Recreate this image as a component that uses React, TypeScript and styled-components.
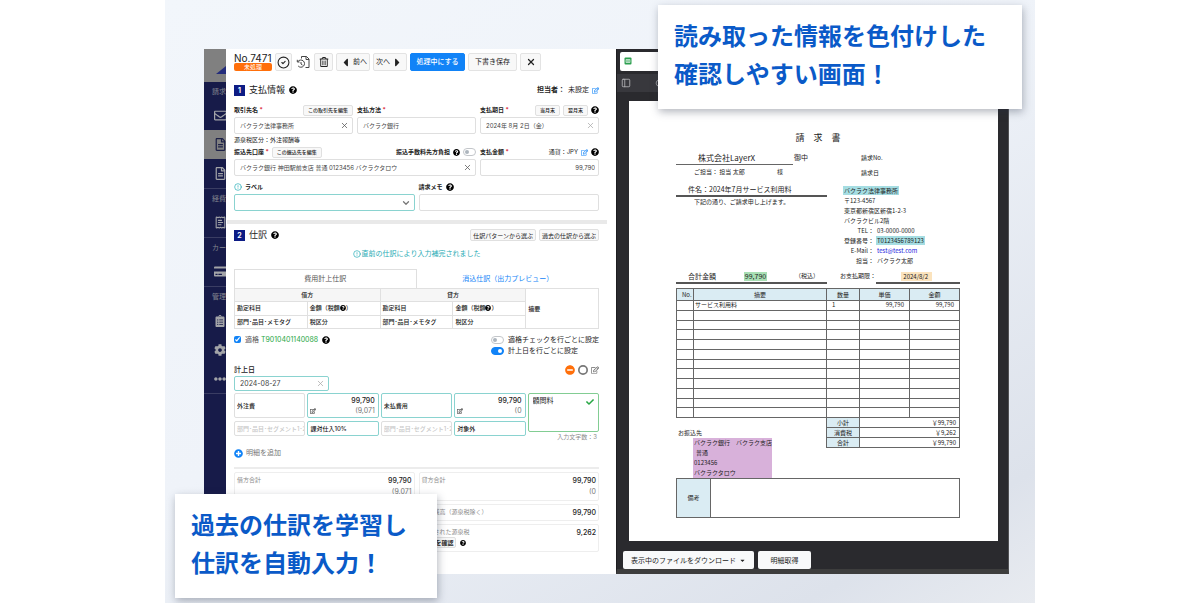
import React, { useState } from "react";
import styled, { createGlobalStyle, css } from "styled-components";
import {
  FaQuestionCircle,
  FaRegTrashAlt,
  FaRegEdit,
  FaCaretLeft,
  FaCaretRight,
  FaCaretDown,
  FaRegEnvelope,
  FaRegFileAlt,
  FaCreditCard,
  FaCog,
  FaEllipsisH,
  FaPlusCircle,
  FaMinusCircle,
  FaCheck,
  FaClipboardList,
} from "react-icons/fa";
import { X, CircleCheck, CircleAlert, ChevronDown, ReceiptText, Circle, Search, PanelLeft } from "lucide-react";

const color = {
  ink: "#222222",
  soft: "#555555",
  muted: "#8c8c8c",
  line: "#dfdfdf",
  teal: "#8ad3d0",
  tealText: "#1fabb5",
  blue: "#1183f7",
  navy: "#171b49",
  orange: "#ff6f0a",
  green: "#28a745",
  headline: "#0a5ac8",
};

const GlobalStyle = createGlobalStyle`
  * { box-sizing: border-box; }
  body {
    margin: 0;
    background: #ffffff;
    color: ${color.ink};
    font-family: Inter, "Noto Sans CJK JP", sans-serif;
    font-size: 7px;
    line-height: 10px;
  }
  button, input, select { font: inherit; color: inherit; margin: 0; }
  button { cursor: pointer; }
  svg { flex: none; display: block; }
`;

/* ---------- page frame ---------- */

const Page = styled.main`
  padding: 0 165px;
`;

const Stage = styled.div`
  position: relative;
  padding: 49px 26px 29px 39px;
  background: linear-gradient(150deg, #f2f6fb 0%, #eff3f9 45%, #dde2eb 88%, #e8ebf0 100%);
`;

const AppWindow = styled.div`
  display: grid;
  grid-template-columns: 22px minmax(0, 390fr) minmax(0, 393fr);
  background: #ffffff;
`;

const Callout = styled.p<{ $place: "top" | "bottom" }>`
  position: absolute;
  margin: 0;
  padding: 11px 16px 17px;
  background: #ffffff;
  box-shadow: 1px 3px 8px rgba(40, 50, 70, 0.35);
  color: ${color.headline};
  font-family: "Noto Sans CJK JP", sans-serif;
  font-size: 24px;
  line-height: 38px;
  font-weight: 700;
  white-space: nowrap;
  ${(p) =>
    p.$place === "top"
      ? css`top: 5px; right: 13px; width: 364px;`
      : css`bottom: 5px; left: 10px; width: 262px;`}
`;

/* ---------- side navigation ---------- */

const Side = styled.nav`
  background: ${color.navy};
  overflow: hidden;
  color: #85868f;
`;

const Brand = styled.div`
  height: 33px;
  display: flex;
  align-items: flex-end;
  justify-content: flex-end;
  padding-bottom: 8px;
  background: #808080;
`;

const NavGroup = styled.div`
  border-bottom: 1px solid #3a3d63;
`;

const NavTitle = styled.div`
  height: 19px;
  padding: 5px 0 0 8px;
  white-space: nowrap;
`;

const NavItem = styled.a<{ $active?: boolean }>`
  display: flex;
  align-items: center;
  height: 29px;
  padding-left: 10px;
  color: ${(p) => (p.$active ? "#1c2046" : "#a3a4a8")};
  background: ${(p) => (p.$active ? "#808080" : "transparent")};
`;

/* ---------- form ---------- */

const FormPane = styled.form`
  padding: 3px 17px 20px 8px;
  display: flex;
  flex-direction: column;
`;

const Toolbar = styled.div`
  display: flex;
  align-items: center;
  gap: 3px;
  height: 20px;
`;

const DocId = styled.div`
  width: 38px;
  font-size: 10px;
  line-height: 10px;
  white-space: nowrap;
`;

const Status = styled.span`
  display: block;
  height: 8px;
  border-radius: 2px;
  background: ${color.orange};
  color: #ffffff;
  font-size: 6px;
  line-height: 8px;
  text-align: center;
`;

const ToolButton = styled.button<{ $primary?: boolean; $plain?: boolean; $width: number }>`
  display: flex;
  align-items: center;
  justify-content: center;
  gap: 1px;
  width: ${(p) => p.$width}px;
  height: 18px;
  padding: 0;
  border: 1px solid #e3e3e3;
  border-radius: 2px;
  background: #f8f8f8;
  white-space: nowrap;
  ${(p) => p.$primary && css`background: ${color.blue}; border-color: ${color.blue}; color: #ffffff; font-weight: 500;`}
  ${(p) => p.$plain && css`background: none; border-color: transparent;`}
`;

const SectionHead = styled.div<{ $gap: number }>`
  display: flex;
  align-items: center;
  gap: 4px;
  height: 14px;
  margin-top: ${(p) => p.$gap}px;
`;

const StepNo = styled.span`
  width: 11px;
  height: 11px;
  background: #0d1c85;
  color: #ffffff;
  line-height: 11px;
  font-weight: 700;
  text-align: center;
`;

const SectionTitle = styled.h2`
  margin: 0;
  font-size: 9px;
  line-height: 14px;
  font-weight: 400;
`;

const Push = styled.div`
  display: flex;
  align-items: center;
  gap: 3px;
  margin-left: auto;
  white-space: nowrap;
`;

const FieldRow = styled.div<{ $cols: string; $gap?: number }>`
  display: grid;
  grid-template-columns: ${(p) => p.$cols};
  gap: 4px;
  margin-top: ${(p) => p.$gap || 0}px;
`;

const Field = styled.div`
  display: flex;
  flex-direction: column;
  gap: 1px;
  min-width: 0;
`;

const LabelRow = styled.div`
  display: flex;
  align-items: center;
  gap: 3px;
  height: 12px;
  font-size: 6px;
  white-space: nowrap;
`;

const Label = styled.label<{ $required?: boolean }>`
  font-weight: 700;
  ${(p) => p.$required && css`&::after { content: " *"; color: #dc3545; }`}
`;

const MiniButton = styled.button<{ $large?: boolean }>`
  height: ${(p) => (p.$large ? 12 : 11)}px;
  padding: 0 ${(p) => (p.$large ? 2 : 4)}px;
  border: 1px solid #e0e0e0;
  border-radius: 2px;
  background: #f8f8f8;
  font-size: ${(p) => (p.$large ? 6 : 5)}px;
  line-height: 9px;
  font-weight: ${(p) => (p.$large ? 400 : 500)};
  white-space: nowrap;
`;

const IconButton = styled.button<{ $color?: string }>`
  display: inline-flex;
  padding: 0;
  border: 0;
  background: none;
  color: ${(p) => p.$color || "inherit"};
`;

const Control = styled.div<{ $tone?: string; $height?: number; $width?: number }>`
  display: flex;
  align-items: center;
  height: ${(p) => p.$height || 17}px;
  width: ${(p) => (p.$width ? `${p.$width}px` : "auto")};
  padding-right: 3px;
  border: 1px solid ${(p) => p.$tone || color.line};
  border-radius: 2px;
  background: #ffffff;
  color: #444444;
`;

const TextInput = styled.input<{ $align?: string; $inset?: number; $size?: number }>`
  flex: 1;
  min-width: 0;
  width: 100%;
  height: 12px;
  padding: 0 0 0 ${(p) => p.$inset ?? 5}px;
  border: 0;
  background: none;
  outline: 0;
  font-size: ${(p) => p.$size || 6}px;
  text-align: ${(p) => p.$align || "left"};
  &::placeholder { color: #c8c8c8; opacity: 1; }
`;

const LabelSelect = styled.select`
  flex: 1;
  height: 15px;
  border: 0;
  background: none;
  appearance: none;
  outline: 0;
`;

const Note = styled.p`
  margin: 0;
  height: 12px;
  font-size: 6px;
  line-height: 12px;
`;

const Switch = styled.input.attrs({ type: "checkbox", role: "switch" })`
  appearance: none;
  margin: 0;
  width: 13px;
  height: 8px;
  padding: 1px;
  border: 1px solid #c3c6ca;
  border-radius: 4px;
  background: #ffffff;
  display: flex;
  &::before {
    content: "";
    width: 4px;
    height: 4px;
    border-radius: 50%;
    background: #adb5bd;
  }
  &:checked { background: ${color.blue}; border-color: ${color.blue}; justify-content: flex-end; }
  &:checked::before { background: #ffffff; }
`;

const Divider = styled.hr`
  height: 4px;
  margin: 9px -8px 0 -7px;
  border: 0;
  background: #e9e9e9;
`;

const Notice = styled.p`
  display: flex;
  align-items: center;
  justify-content: center;
  gap: 1px;
  height: 10px;
  margin: 7px 0 10px;
  color: ${color.tealText};
`;

const Tabs = styled.div`
  display: grid;
  grid-template-columns: 1fr 1fr;
  height: 19px;
`;

const Tab = styled.button<{ $active?: boolean }>`
  padding: 0;
  border: 1px solid ${(p) => (p.$active ? color.line : "transparent")};
  border-bottom: 0;
  background: none;
  color: ${(p) => (p.$active ? color.soft : color.blue)};
`;

const EntryTable = styled.table`
  width: 100%;
  height: 41px;
  table-layout: fixed;
  border-collapse: collapse;
  font-size: 6px;
  line-height: 10px;
  th, td {
    padding: 0 2px;
    border: 1px solid #e0e0e0;
    text-align: left;
    font-weight: 500;
    white-space: nowrap;
  }
  th[colspan] { text-align: center; background: #f6f6f6; }
  svg { display: inline; vertical-align: -1px; }
`;

const OptionRow = styled.div`
  display: flex;
  justify-content: space-between;
  margin-top: 5px;
`;

const OptionLine = styled.label`
  display: flex;
  align-items: center;
  gap: 4px;
  height: 11px;
  white-space: nowrap;
`;

const Tick = styled.input.attrs({ type: "checkbox" })`
  width: 7px;
  height: 7px;
  accent-color: ${color.blue};
`;

const Qualified = styled.span`
  color: ${color.soft};
`;

const TaxId = styled.span`
  color: ${color.green};
`;

const DateHead = styled.div`
  display: flex;
  align-items: center;
  height: 12px;
  margin-top: 8px;
  font-weight: 500;
`;

const Lines = styled.div`
  display: grid;
  grid-template-columns: repeat(5, minmax(0, 1fr));
  grid-template-rows: 25px 15px 3px;
  gap: 3px 2px;
  margin-top: 2px;
`;

const Cell = styled.div<{ $tone?: string }>`
  display: flex;
  align-items: center;
  min-width: 0;
  overflow: hidden;
  border: 1px solid ${(p) => p.$tone || color.line};
  border-radius: 2px;
  font-weight: 500;
`;

const AmountCell = styled(Cell)`
  display: grid;
  grid-template-columns: auto 1fr;
  align-items: center;
  padding: 1px 3px 1px 2px;
`;

const Amount = styled.input`
  grid-column: 1 / -1;
  width: 100%;
  height: 11px;
  padding: 0;
  border: 0;
  background: none;
  font-size: 7px;
  text-align: right;
  outline: 0;
`;

const Tax = styled.span`
  color: #777777;
  font-weight: 400;
  text-align: right;
`;

const Summary = styled.div`
  grid-column: 5;
  grid-row: 1 / span 3;
`;

const SummaryCell = styled(Cell)`
  height: 39px;
  align-items: flex-start;
  padding: 0 4px 0 0;
  font-weight: 400;
  svg { margin-top: 4px; }
`;

const CountNote = styled.div`
  height: 10px;
  color: ${color.muted};
  font-size: 6px;
  text-align: right;
  padding-right: 2px;
`;

const AddLine = styled.button`
  display: flex;
  align-items: center;
  gap: 3px;
  align-self: flex-start;
  height: 12px;
  margin-top: 5px;
  padding: 0;
  border: 0;
  background: none;
  color: #777777;
`;

const Totals = styled.div`
  display: grid;
  grid-template-columns: 1fr 1fr;
  grid-template-rows: 29px 17px 28px;
  gap: 3px 4px;
  margin-top: 8px;
  padding-top: 3px;
  border-top: 2px solid #ececec;
`;

const TotalBox = styled.div<{ $right?: boolean }>`
  display: flex;
  justify-content: space-between;
  padding: 2px 2px 0;
  border: 1px solid #eeeeee;
  border-radius: 2px;
  grid-column: ${(p) => (p.$right ? 2 : "auto")};
`;

const TotalLabel = styled.div`
  color: ${color.muted};
  font-size: 6px;
`;

const TotalValue = styled.div`
  text-align: right;
  line-height: 11px;
  font-weight: 500;
`;

const SubLine = styled.div`
  display: flex;
  align-items: center;
  gap: 4px;
  color: ${color.ink};
`;

const ConfirmButton = styled(MiniButton)`
  padding: 0 1px;
  font-size: 6px;
  font-weight: 700;
`;

/* ---------- document viewer ---------- */

const Viewer = styled.section`
  display: flex;
  flex-direction: column;
  background: #2a2a2e;
  border-left: 1px solid #1d1d20;
  border-right: 1px solid #515154;
  border-bottom: 5px solid #3d3d3d;
  font-family: "Noto Sans CJK JP", sans-serif;
`;

const SourceBar = styled.div`
  padding: 3px;
`;

const SourceName = styled.div`
  height: 19px;
  padding: 5px 4px;
  border-radius: 2px;
  background: #ffffff;
`;

const ViewerTools = styled.div`
  display: flex;
  align-items: center;
  gap: 24px;
  height: 18px;
  padding-left: 4px;
  background: #38383d;
  color: #b5b5b8;
`;

const Sheet = styled.article`
  flex: 1;
  margin: 9px 10px 10px 12px;
  padding: 31px 38px 23px 47px;
  background: #ffffff;
  font-size: 6px;
  white-space: nowrap;
`;

const SheetTitle = styled.h1`
  margin: 0;
  font-size: 9px;
  line-height: 12px;
  font-weight: 400;
  text-align: center;
`;

const SheetTop = styled.div`
  display: grid;
  grid-template-columns: 151fr 133fr;
  margin-top: 7px;
`;

const Addressee = styled.div`
  display: flex;
  align-items: flex-end;
  height: 14px;
`;

const Company = styled.div`
  width: 117px;
  height: 14px;
  padding-left: 22px;
  border-bottom: 1px solid #666666;
  font-size: 8px;
  line-height: 13px;
`;

const Honorific = styled.div`
  padding: 0 1px 2px;
  font-size: 7px;
  line-height: 12px;
`;

const Contact = styled.div`
  display: flex;
  justify-content: space-between;
  width: 107px;
  padding-left: 18px;
  margin-top: 2px;
`;

const Subject = styled.div`
  height: 14px;
  margin-top: 6px;
  padding-left: 12px;
  border-bottom: 2px solid #555555;
  font-size: 7px;
  line-height: 13px;
`;

const Greeting = styled.div`
  padding-left: 18px;
`;

const Issuer = styled.div`
  padding-left: 17px;
`;

const IssueMeta = styled.div`
  display: grid;
  gap: 2px;
  padding-left: 34px;
  margin-bottom: 7px;
  line-height: 13px;
`;

const Mark = styled.mark<{ $color: string }>`
  display: inline-block;
  padding: 0 1px;
  margin: 0 -1px;
  background: ${(p) => p.$color};
  color: inherit;
  line-height: 9px;
`;

const DueMark = styled(Mark)`
  padding: 0 4px 0 2px;
`;

const IssuerLine = styled.div`
  height: 10px;
`;

const IssuerPair = styled.div`
  display: grid;
  grid-template-columns: 30px auto;
  gap: 3px;
  height: 10px;
  justify-content: start;
  span:first-child { text-align: right; }
  a { color: #2222dd; text-decoration: none; }
`;

const SumRow = styled.div`
  display: grid;
  grid-template-columns: 151fr 49fr 84fr;
  margin-top: 4px;
  height: 14px;
`;

const SumCell = styled.div<{ $ruled?: boolean }>`
  display: flex;
  align-items: center;
  justify-content: flex-end;
  border-bottom: 2px solid ${(p) => (p.$ruled ? "#555555" : "transparent")};
`;

const SumMain = styled(SumCell)`
  justify-content: space-between;
  padding: 0 8px 0 12px;
  font-size: 7px;
`;

const SumDue = styled(SumCell)`
  padding-right: 29px;
`;

const Small = styled.span`
  font-size: 6px;
`;

const ItemTable = styled.table`
  width: 100%;
  height: 130px;
  margin-top: 4px;
  table-layout: fixed;
  border-collapse: collapse;
  line-height: 8px;
  th, td { padding: 0 5px; border: 1px solid #666666; height: 9px; }
  th { height: 12px; background: #daecf3; font-weight: 400; }
  td:nth-child(2) { padding: 0 1px; }
  td:nth-child(n + 4) { text-align: right; }
`;

const SheetFoot = styled.div`
  display: grid;
  grid-template-columns: 150fr 134fr;
`;

const TotalsTable = styled.table`
  width: 100%;
  height: 31px;
  margin-top: -1px;
  table-layout: fixed;
  border-collapse: collapse;
  align-self: start;
  line-height: 8px;
  th, td { padding: 0 3px; border: 1px solid #666666; }
  th { width: 33px; background: #daecf3; font-weight: 400; }
  td { text-align: right; }
`;

const Bank = styled.div`
  padding: 10px 0 0 2px;
`;

const BankMark = styled.div`
  width: 79px;
  margin-left: 15px;
  padding-left: 1px;
  background: #d8b1da;
  line-height: 10px;
  div:nth-child(2) { padding-left: 2px; }
`;

const Remarks = styled.div`
  display: grid;
  grid-template-columns: 34px 1fr;
  height: 40px;
  border: 1px solid #666666;
`;

const RemarksLabel = styled.div`
  display: flex;
  align-items: center;
  justify-content: center;
  border-right: 1px solid #666666;
  background: #daecf3;
`;

const ViewerActions = styled.div`
  display: flex;
  gap: 4px;
  padding: 0 6px;
`;

const ViewerButton = styled.button<{ $width: number }>`
  display: flex;
  align-items: center;
  justify-content: center;
  gap: 3px;
  width: ${(p) => p.$width}px;
  height: 18px;
  padding: 0;
  border: 0;
  border-radius: 2px;
  background: #f8f9fa;
  white-space: nowrap;
`;

/* ---------- small pieces ---------- */

const Help = ({ size = 8 }: { size?: number }) => <FaQuestionCircle size={size} color="#000000" aria-label="ヘルプ" />;

const HistoryDoc = () => (
  <svg width="14" height="14" viewBox="0 0 14 14" fill="none" stroke="#444444" strokeWidth="1">
    <path d="M5.5 3.5V1.5h5l2.500 2.500v8.500H9.500" />
    <path d="M10 1.500v3h3" />
    <path d="M2 6.500A3.600 3.600 0 1 1 2.200 11" />
    <path d="M1.300 4.800v2.200h2.200M5 7v2l1.500 1" />
  </svg>
);

const SidebarLogo = () => (
  <svg width="10" height="8" viewBox="0 0 10 8">
    <path d="M0 8L10 0v8z" fill="#242d7c" />
  </svg>
);

const SheetLogo = () => (
  <svg width="8" height="8" viewBox="0 0 8 8">
    <rect x="0.500" y="0.500" width="7" height="7" rx="1" fill="#2c9f4f" />
    <path d="M2 2.500h4v3H2zM2 4h4M4 2.500v3" stroke="#ffffff" strokeWidth="0.600" fill="none" />
  </svg>
);

const Clear = ({ tone = "#555555" }: { tone?: string }) => (
  <IconButton type="button" $color={tone} aria-label="クリア">
    <X size={9} />
  </IconButton>
);

const AmountBox = ({ value, tax, label }: { value: string; tax: string; label: string }) => (
  <AmountCell $tone={color.teal}>
    <Amount defaultValue={value} aria-label={label} />
    <IconButton type="button" aria-label="税額を編集">
      <FaRegEdit size={6} />
    </IconButton>
    <Tax>{tax}</Tax>
  </AmountCell>
);

const blankRows = Array.from({ length: 11 }, (_, i) => i);

/* ---------- sections ---------- */

const Sidebar = () => (
  <Side aria-label="メインメニュー">
    <Brand><SidebarLogo /></Brand>
    <NavGroup>
      <NavTitle>請求</NavTitle>
      <NavItem href="#mail" aria-label="受信"><FaRegEnvelope size={13} /></NavItem>
      <NavItem href="#invoice" aria-label="請求書" $active><FaRegFileAlt size={13} /></NavItem>
      <NavItem href="#document" aria-label="書類"><FaRegFileAlt size={13} /></NavItem>
    </NavGroup>
    <NavGroup>
      <NavTitle>経費</NavTitle>
      <NavItem href="#expense" aria-label="経費精算"><ReceiptText size={13} /></NavItem>
    </NavGroup>
    <NavGroup>
      <NavTitle>カー</NavTitle>
      <NavItem href="#card" aria-label="カード明細"><FaCreditCard size={13} /></NavItem>
    </NavGroup>
    <NavGroup>
      <NavTitle>管理</NavTitle>
      <NavItem href="#list" aria-label="一覧"><FaClipboardList size={12} /></NavItem>
      <NavItem href="#settings" aria-label="設定"><FaCog size={12} /></NavItem>
      <NavItem href="#more" aria-label="その他"><FaEllipsisH size={12} /></NavItem>
    </NavGroup>
  </Side>
);

const PaymentSection = () => (
  <>
    <SectionHead $gap={11}>
      <StepNo>1</StepNo>
      <SectionTitle>支払情報</SectionTitle>
      <Help />
      <Push>
        <b>担当者：</b>
        <span>未設定</span>
        <IconButton type="button" $color={color.blue} aria-label="担当者を編集"><FaRegEdit size={7} /></IconButton>
      </Push>
    </SectionHead>
    <FieldRow $cols="1fr 1fr 1fr" $gap={7}>
      <Field>
        <LabelRow>
          <Label htmlFor="partner" $required>取引先名</Label>
          <Push><MiniButton type="button">この取引先を編集</MiniButton></Push>
        </LabelRow>
        <Control><TextInput id="partner" defaultValue="バクラク法律事務所" /><Clear /></Control>
      </Field>
      <Field>
        <LabelRow><Label htmlFor="method" $required>支払方法</Label></LabelRow>
        <Control><TextInput id="method" defaultValue="バクラク銀行" /></Control>
      </Field>
      <Field>
        <LabelRow>
          <Label htmlFor="due" $required>支払期日</Label>
          <Push>
            <MiniButton type="button">当月末</MiniButton>
            <MiniButton type="button">翌月末</MiniButton>
            <Help />
          </Push>
        </LabelRow>
        <Control><TextInput id="due" defaultValue="2024年 8月 2日（金）" /><Clear tone="#aaaaaa" /></Control>
      </Field>
    </FieldRow>
    <Note>源泉税区分：外注報酬等</Note>
    <FieldRow $cols="242fr 119fr">
      <Field>
        <LabelRow>
          <Label htmlFor="account" $required>振込先口座</Label>
          <MiniButton type="button">この振込先を編集</MiniButton>
          <Push>
            <Label htmlFor="fee">振込手数料先方負担</Label>
            <Help size={7} />
            <Switch id="fee" />
          </Push>
        </LabelRow>
        <Control><TextInput id="account" defaultValue="バクラク銀行 神田駅前支店 普通 0123456 バクラクタロウ" /><Clear /></Control>
      </Field>
      <Field>
        <LabelRow>
          <Label htmlFor="amount" $required>支払金額</Label>
          <Push>
            <span>通貨：JPY</span>
            <IconButton type="button" $color={color.blue} aria-label="通貨を編集"><FaRegEdit size={7} /></IconButton>
            <Help />
          </Push>
        </LabelRow>
        <Control><TextInput id="amount" $align="right" defaultValue="99,790" /></Control>
      </Field>
    </FieldRow>
    <FieldRow $cols="1fr 1fr" $gap={5}>
      <Field>
        <LabelRow>
          <CircleAlert size={8} color={color.tealText} />
          <Label htmlFor="tag">ラベル</Label>
        </LabelRow>
        <Control $tone={color.teal}>
          <LabelSelect id="tag" defaultValue=""><option value=""></option></LabelSelect>
          <ChevronDown size={10} strokeWidth={3} color="#777777" />
        </Control>
      </Field>
      <Field>
        <LabelRow><Label htmlFor="memo">請求メモ</Label><Help /></LabelRow>
        <Control><TextInput id="memo" /></Control>
      </Field>
    </FieldRow>
  </>
);

const JournalSection = () => {
  const [tab, setTab] = useState(0);
  return (
    <>
      <SectionHead $gap={4}>
        <StepNo>2</StepNo>
        <SectionTitle>仕訳</SectionTitle>
        <Help />
        <Push>
          <MiniButton type="button" $large>仕訳パターンから選ぶ</MiniButton>
          <MiniButton type="button" $large>過去の仕訳から選ぶ</MiniButton>
        </Push>
      </SectionHead>
      <Notice><CircleAlert size={8} />直前の仕訳により入力補完されました</Notice>
      <Tabs role="tablist">
        <Tab type="button" role="tab" aria-selected={tab === 0} $active={tab === 0} onClick={() => setTab(0)}>費用計上仕訳</Tab>
        <Tab type="button" role="tab" aria-selected={tab === 1} $active={tab === 1} onClick={() => setTab(1)}>消込仕訳（出力プレビュー）</Tab>
      </Tabs>
      <EntryTable>
        <tbody>
          <tr><th colSpan={2}>借方</th><th colSpan={2}>貸方</th><td rowSpan={3}>摘要</td></tr>
          <tr><td>勘定科目</td><td>金額（税額<Help size={6} />）</td><td>勘定科目</td><td>金額（税額<Help size={6} />）</td></tr>
          <tr><td>部門･品目･メモタグ</td><td>税区分</td><td>部門･品目･メモタグ</td><td>税区分</td></tr>
        </tbody>
      </EntryTable>
      <OptionRow>
        <OptionLine>
          <Tick defaultChecked />
          <Qualified>適格 <TaxId>T9010401140088</TaxId></Qualified>
          <Help />
        </OptionLine>
        <div>
          <OptionLine><Switch />適格チェックを行ごとに設定</OptionLine>
          <OptionLine><Switch defaultChecked />計上日を行ごとに設定</OptionLine>
        </div>
      </OptionRow>
      <DateHead>
        <label htmlFor="booked">計上日</label>
        <Push>
          <IconButton type="button" $color={color.orange} aria-label="削除"><FaMinusCircle size={10} /></IconButton>
          <IconButton type="button" $color="#777777" aria-label="リセット"><Circle size={10} strokeWidth={4} /></IconButton>
          <IconButton type="button" $color="#666666" aria-label="編集"><FaRegEdit size={8} /></IconButton>
        </Push>
      </DateHead>
      <Control $tone={color.teal} $height={15} $width={95}>
        <TextInput id="booked" $size={7} defaultValue="2024-08-27" /><Clear tone="#aaaaaa" />
      </Control>
      <Lines>
        <Cell><TextInput $inset={2} aria-label="借方勘定科目" defaultValue="外注費" /></Cell>
        <AmountBox value="99,790" tax="(9,071" label="借方金額" />
        <Cell $tone={color.teal}><TextInput $inset={2} aria-label="貸方勘定科目" defaultValue="未払費用" /></Cell>
        <AmountBox value="99,790" tax="(0" label="貸方金額" />
        <Summary>
          <SummaryCell $tone="#82cd93">
            <TextInput $inset={4} $size={7} aria-label="摘要" defaultValue="顧問料" />
            <FaCheck size={8} color={color.green} />
          </SummaryCell>
          <CountNote>入力文字数：3</CountNote>
        </Summary>
        <Cell><TextInput $inset={2} aria-label="借方部門" placeholder="部門･品目･セグメント1･2" /></Cell>
        <Cell $tone={color.teal}><TextInput $inset={2} aria-label="借方税区分" defaultValue="課対仕入10%" /></Cell>
        <Cell><TextInput $inset={2} aria-label="貸方部門" placeholder="部門･品目･セグメント1･2" /></Cell>
        <Cell $tone={color.teal}><TextInput $inset={2} aria-label="貸方税区分" defaultValue="対象外" /></Cell>
      </Lines>
      <AddLine type="button"><FaPlusCircle size={9} color={color.blue} />明細を追加</AddLine>
      <Totals>
        <TotalBox>
          <TotalLabel>借方合計</TotalLabel>
          <TotalValue>99,790<br /><Tax>(9,071</Tax></TotalValue>
        </TotalBox>
        <TotalBox>
          <TotalLabel>貸方合計</TotalLabel>
          <TotalValue>99,790<br /><Tax>(0</Tax></TotalValue>
        </TotalBox>
        <TotalBox $right>
          <TotalLabel>貸方残高（源泉税除く）</TotalLabel>
          <TotalValue>99,790</TotalValue>
        </TotalBox>
        <TotalBox $right>
          <TotalLabel>
            計算された源泉税
            <SubLine><ConfirmButton type="button">内訳を確認</ConfirmButton><Help size={6} /></SubLine>
          </TotalLabel>
          <TotalValue>9,262</TotalValue>
        </TotalBox>
      </Totals>
    </>
  );
};

const InvoiceSheet = () => (
  <Sheet>
    <SheetTitle>請　求　書</SheetTitle>
    <SheetTop>
      <div>
        <Addressee><Company>株式会社LayerX</Company><Honorific>御中</Honorific></Addressee>
        <Contact><span>ご担当： 担当 太郎</span><span>様</span></Contact>
        <Subject>件名：2024年7月サービス利用料</Subject>
        <Greeting>下記の通り、ご請求申し上げます。</Greeting>
      </div>
      <div>
        <IssueMeta><span>請求No.</span><span>請求日</span></IssueMeta>
        <Issuer>
          <IssuerLine><Mark $color="#a5dde2">バクラク法律事務所</Mark></IssuerLine>
          <IssuerLine>〒123-4567</IssuerLine>
          <IssuerLine>東京都新宿区新宿1-2-3</IssuerLine>
          <IssuerLine>バクラクビル2階</IssuerLine>
          <IssuerPair><span>TEL：</span><span>03-0000-0000</span></IssuerPair>
          <IssuerPair><span>登録番号：</span><span><Mark $color="#a5dde2">T0123456789123</Mark></span></IssuerPair>
          <IssuerPair><span>E-Mail：</span><a href="mailto:test@test.com">test@test.com</a></IssuerPair>
          <IssuerPair><span>担当：</span><span>バクラク太郎</span></IssuerPair>
        </Issuer>
      </div>
    </SheetTop>
    <SumRow>
      <SumMain $ruled><span>合計金額</span><Mark $color="#a9dfb4">99,790</Mark><Small>（税込）</Small></SumMain>
      <SumCell>お支払期限：</SumCell>
      <SumDue $ruled><DueMark $color="#fbe3bd">2024/8/2</DueMark></SumDue>
    </SumRow>
    <ItemTable>
      <colgroup>
        <col width="17" /><col /><col width="33" /><col width="50" /><col width="50" />
      </colgroup>
      <thead>
        <tr><th>No.</th><th>摘要</th><th>数量</th><th>単価</th><th>金額</th></tr>
      </thead>
      <tbody>
        <tr><td /><td>サービス利用料</td><td>1</td><td>99,790</td><td>99,790</td></tr>
        {blankRows.map((i) => (
          <tr key={i}><td /><td /><td /><td /><td /></tr>
        ))}
      </tbody>
    </ItemTable>
    <SheetFoot>
      <Bank>
        <div>お振込先</div>
        <BankMark>
          <div>バクラク銀行　バクラク支店</div>
          <div>普通</div>
          <div>0123456</div>
          <div>バクラクタロウ</div>
        </BankMark>
      </Bank>
      <TotalsTable>
        <tbody>
          <tr><th>小計</th><td>￥99,790</td></tr>
          <tr><th>消費税</th><td>￥9,262</td></tr>
          <tr><th>合計</th><td>￥99,790</td></tr>
        </tbody>
      </TotalsTable>
    </SheetFoot>
    <Remarks><RemarksLabel>備考</RemarksLabel><div /></Remarks>
  </Sheet>
);

export default function App() {
  return (
    <>
      <GlobalStyle />
      <Page>
        <Stage>
          <AppWindow>
            <Sidebar />
            <FormPane onSubmit={(e) => e.preventDefault()}>
              <Toolbar>
                <DocId>No.7471<Status>未処理</Status></DocId>
                <ToolButton type="button" $width={17} aria-label="承認"><CircleCheck size={13} strokeWidth={2} /></ToolButton>
                <ToolButton type="button" $width={16} $plain aria-label="履歴"><HistoryDoc /></ToolButton>
                <ToolButton type="button" $width={19} aria-label="削除"><FaRegTrashAlt size={10} /></ToolButton>
                <ToolButton type="button" $width={34}><FaCaretLeft size={13} />前へ</ToolButton>
                <ToolButton type="button" $width={34}>次へ<FaCaretRight size={13} /></ToolButton>
                <ToolButton type="submit" $width={55} $primary>処理中にする</ToolButton>
                <ToolButton type="button" $width={49}>下書き保存</ToolButton>
                <ToolButton type="button" $width={21} aria-label="閉じる"><X size={10} strokeWidth={3} /></ToolButton>
              </Toolbar>
              <PaymentSection />
              <Divider />
              <JournalSection />
            </FormPane>
            <Viewer>
              <SourceBar><SourceName><SheetLogo /></SourceName></SourceBar>
              <ViewerTools><PanelLeft size={10} /><Search size={9} /></ViewerTools>
              <InvoiceSheet />
              <ViewerActions>
                <ViewerButton type="button" $width={131}>表示中のファイルをダウンロード<FaCaretDown size={7} /></ViewerButton>
                <ViewerButton type="button" $width={53}>明細取得</ViewerButton>
              </ViewerActions>
            </Viewer>
          </AppWindow>
          <Callout $place="top">読み取った情報を色付けした<br />確認しやすい画面！</Callout>
          <Callout $place="bottom">過去の仕訳を学習し<br />仕訳を自動入力！</Callout>
        </Stage>
      </Page>
    </>
  );
}
